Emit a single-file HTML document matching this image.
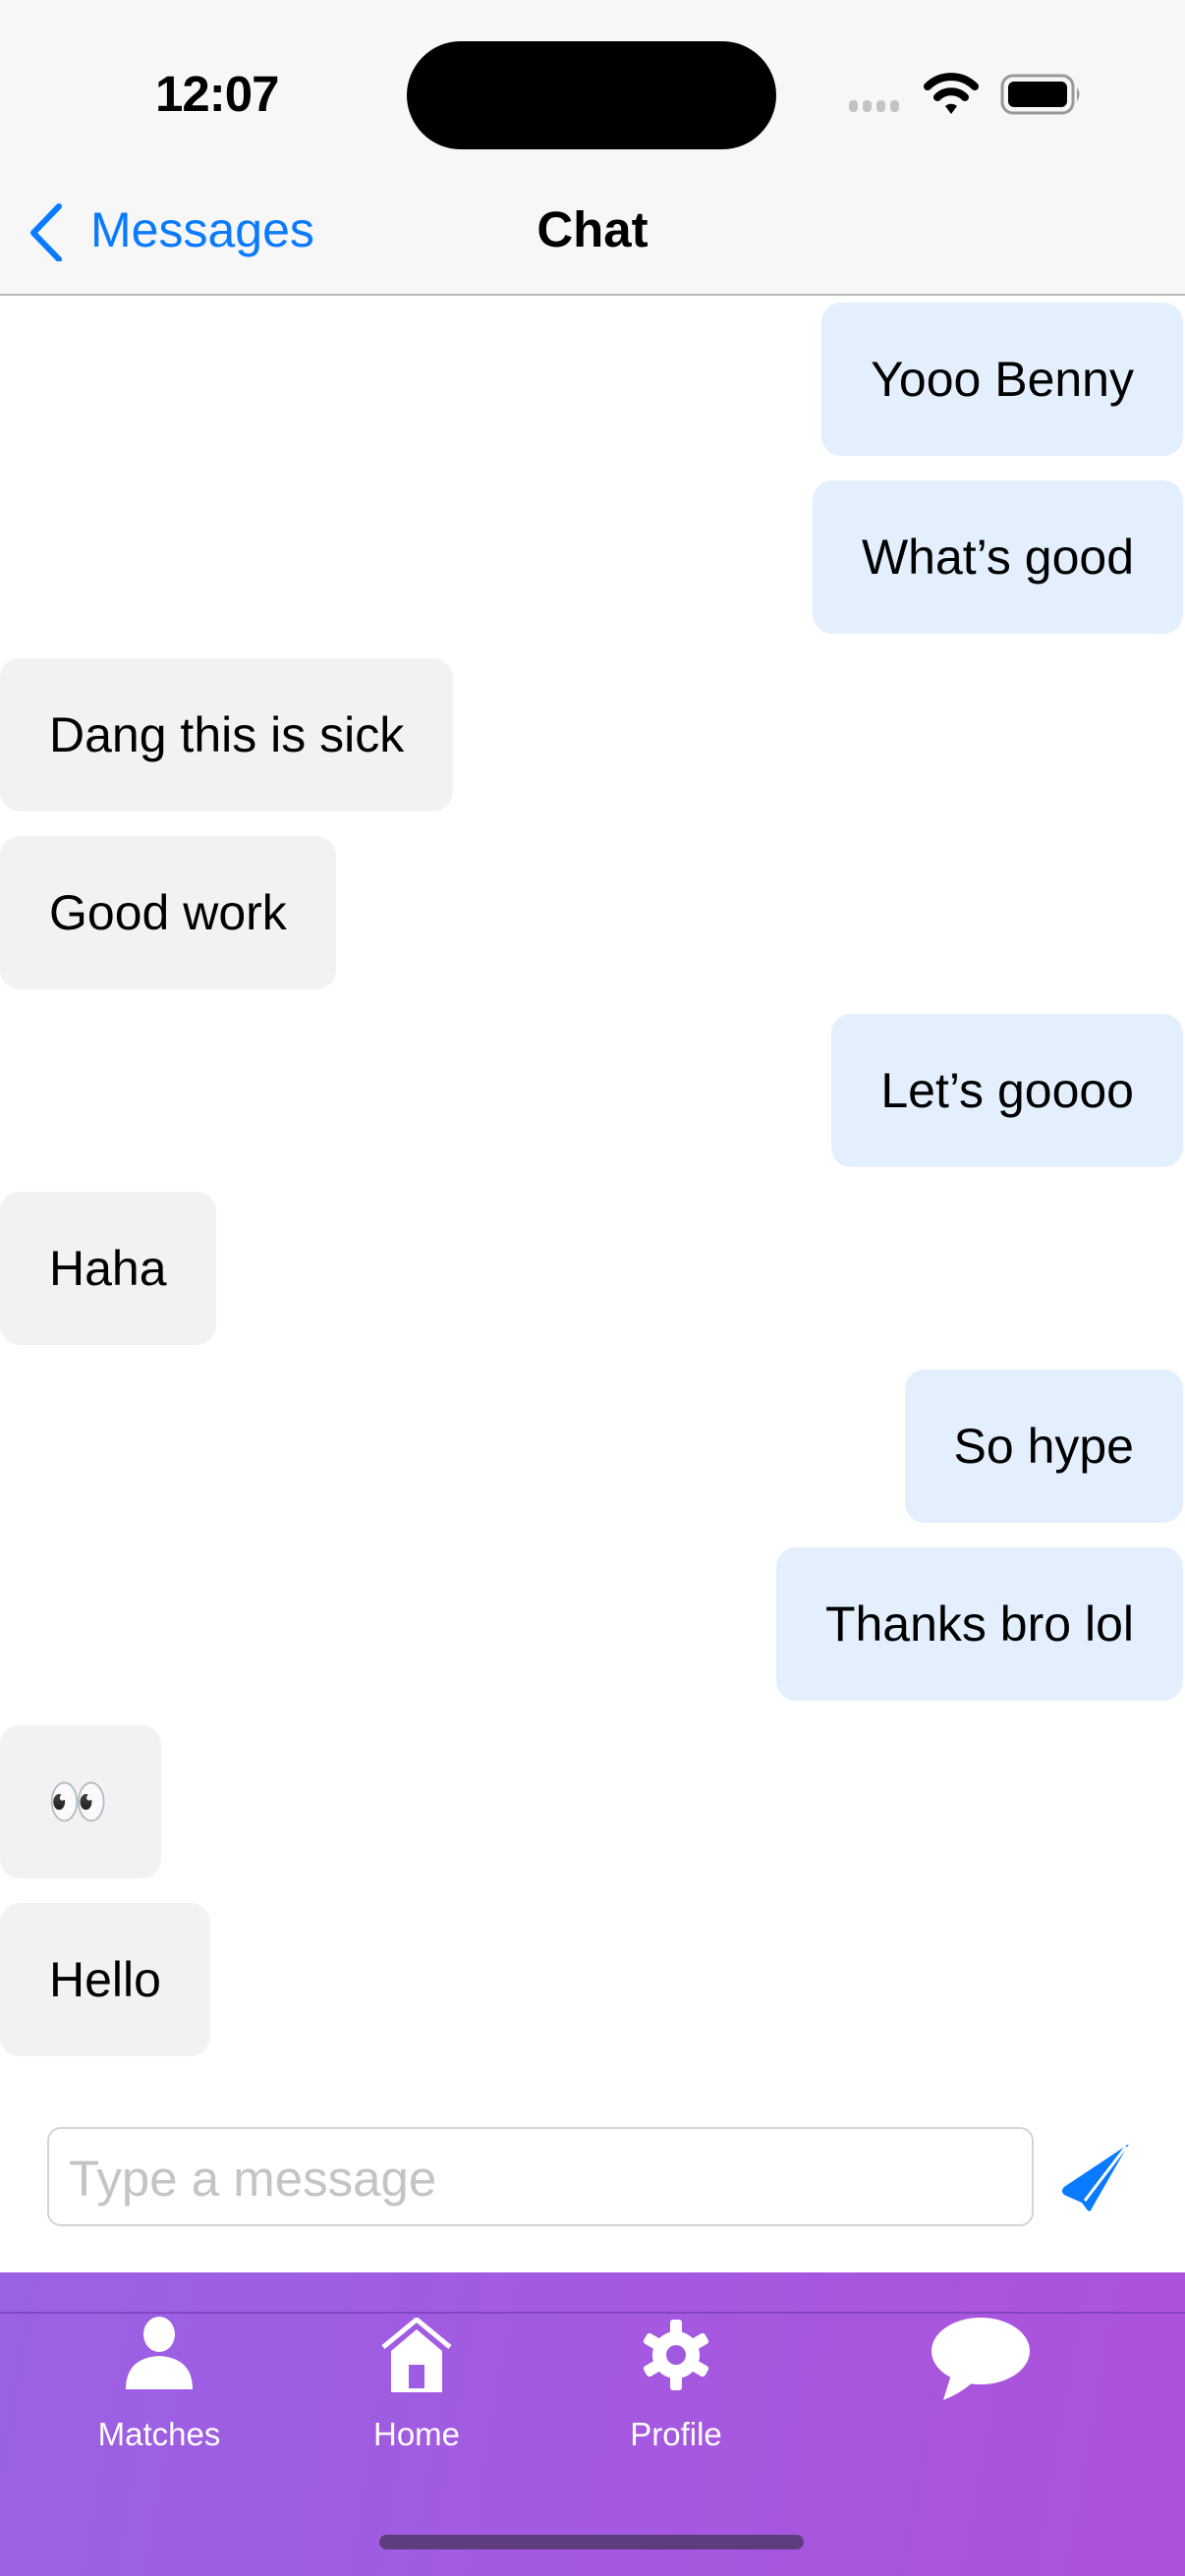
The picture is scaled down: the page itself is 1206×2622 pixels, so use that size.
<!DOCTYPE html>
<html><head><meta charset="utf-8"><style>
*{margin:0;padding:0;box-sizing:border-box}
body{width:1206px;height:2622px;position:relative;background:#fff;font-family:"Liberation Sans",sans-serif;overflow:hidden}
.hdr{position:absolute;left:0;top:0;width:1206px;height:301px;background:#f7f7f7;border-bottom:2px solid #b8b8b8}
.time{position:absolute;left:158px;top:66px;font-size:51px;font-weight:bold;letter-spacing:-1px}
.island{position:absolute;left:414px;top:42px;width:376px;height:110px;background:#000;border-radius:55px}
.back{position:absolute;left:92px;top:205px;font-size:50px;color:#0a7aff}
.title{position:absolute;left:0;width:1206px;text-align:center;top:204px;font-size:51px;font-weight:bold}
.b{position:absolute;height:156px;line-height:156px;padding:0 50px;font-size:50px;border-radius:20px;white-space:nowrap}
.r{right:2px;background:#e3effd}
.l{left:0;background:#f2f2f2}
.inp{position:absolute;left:48px;top:2165px;width:1004px;height:101px;border:2px solid #d4d4d4;border-radius:14px;font-size:51px;color:#c4c4c4;padding-left:20px;line-height:101px}
.tab{position:absolute;left:0;top:2313px;width:1206px;height:309px;background:linear-gradient(100deg,#9a61e4,#ad52dc)}
.tab .ln{position:absolute;left:0;top:40px;width:1206px;height:2px;background:#8446c0}
.lab{position:absolute;font-size:33px;color:#fff;width:200px;text-align:center}
.hi{position:absolute;left:386px;top:2580px;width:432px;height:15px;border-radius:8px;background:#5e3d7f}
</style></head><body>
<div class="hdr">
<div class="time">12:07</div>
<div class="island"></div>
<svg style="position:absolute;left:862px;top:98px" width="60" height="20"><g fill="#c4c4c4"><rect x="2" y="4" width="9" height="12" rx="4"/><rect x="16" y="4" width="9" height="12" rx="4"/><rect x="30" y="4" width="9" height="12" rx="4"/><rect x="44" y="4" width="9" height="12" rx="4"/></g></svg>
<svg style="position:absolute;left:940px;top:72px" width="56" height="46" viewBox="0 0 56 46"><path d="M4 16 A34 34 0 0 1 52 16" stroke="#000" stroke-width="8" fill="none" stroke-linecap="round"/><path d="M14 27 A20 20 0 0 1 42 27" stroke="#000" stroke-width="8" fill="none" stroke-linecap="round"/><path d="M22 36 L28 44 L34 36 A9 9 0 0 0 22 36Z" fill="#000"/></svg>
<svg style="position:absolute;left:1018px;top:74px" width="84" height="44" viewBox="0 0 84 44"><rect x="2" y="3" width="72" height="38" rx="11" fill="none" stroke="#999" stroke-width="3"/><rect x="8" y="9" width="60" height="26" rx="6" fill="#000"/><path d="M78 15 Q83 22 78 29Z" fill="#999"/></svg>
<svg style="position:absolute;left:26px;top:206px" width="40" height="60" viewBox="0 0 40 60"><path d="M34 4 L8 31 L34 58" stroke="#0a7aff" stroke-width="6" fill="none" stroke-linecap="round" stroke-linejoin="round"/></svg>
<div class="back">Messages</div>
<div class="title">Chat</div>
</div>
<div class="b r" style="top:308px">Yooo Benny</div>
<div class="b r" style="top:489px">What’s good</div>
<div class="b l" style="top:670px">Dang this is sick</div>
<div class="b l" style="top:851px">Good work</div>
<div class="b r" style="top:1032px">Let’s goooo</div>
<div class="b l" style="top:1213px">Haha</div>
<div class="b r" style="top:1394px">So hype</div>
<div class="b r" style="top:1575px">Thanks bro lol</div>
<div class="b l" style="top:1756px;font-size:50px;width:164px;padding:0 48px">👀</div>
<div class="b l" style="top:1937px">Hello</div>
<div class="inp">Type a message</div>
<svg style="position:absolute;left:1079px;top:2180px" width="72" height="72" viewBox="0 0 72 72"><path d="M70 2 L4 46 Q0 50 4 54 L22 62 L28 70 Q31 72 32 68Z" fill="#0a7aff"/><path d="M67 5 L25 60" stroke="#fff" stroke-width="3"/></svg>
<div class="tab"><div class="ln"></div>
<div class="lab" style="left:62px;top:146px">Matches</div>
<div class="lab" style="left:324px;top:146px">Home</div>
<div class="lab" style="left:588px;top:146px">Profile</div>
<svg style="position:absolute;left:124px;top:45px" width="76" height="76" viewBox="0 0 76 76"><ellipse cx="38" cy="18" rx="16" ry="18" fill="#fff"/><path d="M4 74 Q4 42 38 40 Q72 42 72 74Z" fill="#fff"/></svg>
<svg style="position:absolute;left:388px;top:46px" width="72" height="78" viewBox="0 0 72 78"><path d="M2 30 L36 2 L70 30" stroke="#fff" stroke-width="5" fill="none"/><path d="M10 34 L36 12 L62 34 L62 76 L10 76Z" fill="#fff"/><rect x="28" y="48" width="16" height="24" fill="#9f5ce2"/></svg>
<svg style="position:absolute;left:650px;top:46px" width="76" height="76" viewBox="0 0 76 76"><g fill="#fff"><circle cx="38" cy="38" r="24"/><rect x="32" y="2" width="12" height="72" rx="3"/><rect x="32" y="2" width="12" height="72" rx="3" transform="rotate(60 38 38)"/><rect x="32" y="2" width="12" height="72" rx="3" transform="rotate(120 38 38)"/></g><circle cx="38" cy="38" r="10" fill="#a05ae1"/></svg>
<svg style="position:absolute;left:946px;top:44px" width="104" height="88" viewBox="0 0 104 88"><ellipse cx="52" cy="36" rx="50" ry="34" fill="#fff"/><path d="M22 60 L14 86 Q30 80 44 68Z" fill="#fff"/></svg>
</div>
<div class="hi"></div>
</body></html>
